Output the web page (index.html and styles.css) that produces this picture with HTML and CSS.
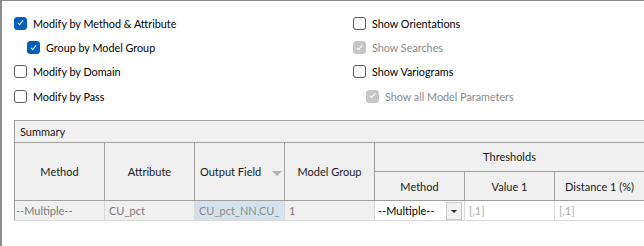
FILE: index.html
```html
<!DOCTYPE html>
<html lang="en">
  <head>
    <meta charset="UTF-8" />
    <title>Modify Settings</title>
    <link rel="stylesheet" href="styles.css">
  </head>
  <body>
    <section class="options">
      <div class="col">
        <label class="check"><span class="box checked"></span>Modify by Method &amp; Attribute</label>
        <label class="check sub"><span class="box checked"></span>Group by Model Group</label>
        <label class="check"><span class="box"></span>Modify by Domain</label>
        <label class="check"><span class="box"></span>Modify by Pass</label>
      </div>
      <div class="col">
        <label class="check"><span class="box"></span>Show Orientations</label>
        <label class="check disabled"><span class="box checked"></span>Show Searches</label>
        <label class="check"><span class="box"></span>Show Variograms</label>
        <label class="check sub disabled"><span class="box checked"></span>Show all Model Parameters</label>
      </div>
    </section>

    <section class="summary">
      <div class="summary-title">Summary</div>
      <table class="grid">
        <colgroup>
          <col><col><col><col><col><col><col>
        </colgroup>
        <thead>
          <tr class="head-top">
            <th rowspan="2">Method</th>
            <th rowspan="2">Attribute</th>
            <th rowspan="2" class="sorted">Output Field <span class="sort-arrow"></span></th>
            <th rowspan="2">Model Group</th>
            <th colspan="3">Thresholds</th>
          </tr>
          <tr class="head-sub">
            <th>Method</th>
            <th>Value 1</th>
            <th>Distance 1 (%)</th>
          </tr>
        </thead>
        <tbody>
          <tr>
            <td class="ro">--Multiple--</td>
            <td class="ro">CU_pct</td>
            <td class="ro selected">CU_pct_NN,CU_</td>
            <td class="ro">1</td>
            <td class="combo"><span class="combo-text">--Multiple--</span><span class="drop"></span></td>
            <td class="empty">[,1]</td>
            <td class="empty">[,1]</td>
          </tr>
        </tbody>
      </table>
    </section>
  </body>
</html>
```

FILE: styles.css
```css
*,
*::before,
*::after {
  box-sizing: border-box;
}
:root {
  --clr-text: #000;
  --clr-muted: #7a7a7a;
  --clr-line: #a0a0a0;
  --clr-line-light: #d9d9d9;
  --clr-head: #f0f0f0;
  --clr-blue: #005fb8;
  --ff-base: Lato, "Liberation Sans", sans-serif;
}
body {
  margin: 0;
  height: 246px;
  font-family: var(--ff-base);
  font-size: 11px;
  color: var(--clr-text);
  background: #fff;
  border-top: 1px solid #8c8c8c;
  border-left: 2px solid #8c8c8c;
  overflow: hidden;
}

/* check options */
.options {
  display: grid;
  grid-template-columns: 339px 1fr;
  padding: 10px 0 0 12px;
}
.col {
  display: flex;
  flex-direction: column;
}
.check {
  display: flex;
  align-items: center;
  gap: 6px;
  height: 24.4px;
  font-size: 10.8px;
  white-space: nowrap;
}
.check.sub {
  padding-left: 13px;
}
.check.disabled {
  color: #8a8a8a;
}
.box {
  flex: none;
  width: 13px;
  height: 13px;
  border: 1px solid #5c5c5c;
  border-radius: 3px;
  background: #fff;
  position: relative;
}
.box.checked {
  border-color: var(--clr-blue);
  background: var(--clr-blue);
}
.box.checked::after {
  content: "";
  position: absolute;
  left: 3.5px;
  top: 1.5px;
  width: 3px;
  height: 6px;
  border: solid #fff;
  border-width: 0 1px 1px 0;
  transform: rotate(40deg);
}
.disabled .box.checked {
  border-color: #c6c6c6;
  background: #c6c6c6;
}

/* summary grid */
.summary {
  margin: 11px 0 0 12px;
  width: 640px;
}
.summary-title {
  height: 23px;
  line-height: 21px;
  padding-left: 5px;
  background: var(--clr-head);
  border: 1px solid var(--clr-line);
  border-right: 0;
  color: #1a1a1a;
}
.grid {
  border-collapse: collapse;
  table-layout: fixed;
  width: 630px;
}
.grid col {
  width: 90px;
}
.grid th {
  background: var(--clr-head);
  border: 1px solid var(--clr-line);
  border-top: 0;
  font-weight: normal;
  color: #1a1a1a;
  padding: 0;
  white-space: nowrap;
}
.head-top th,
.head-sub th {
  height: 29px;
}
.grid .sorted {
  text-align: left;
  padding-left: 5px;
}
.sort-arrow {
  display: inline-block;
  margin-left: 8px;
  border-left: 5px solid transparent;
  border-right: 5px solid transparent;
  border-top: 5px solid #b4b4b4;
  vertical-align: middle;
}
.grid td {
  height: 20px;
  padding: 0 4px;
  border: 1px solid var(--clr-line-light);
  border-top: 0;
  white-space: nowrap;
  overflow: hidden;
}
.grid td:first-child {
  border-left-color: var(--clr-line);
  padding-left: 1px;
}
.grid .ro {
  background: var(--clr-head);
  color: var(--clr-muted);
}
.grid .selected {
  background: #d4e2ec;
  color: #8a8a8a;
  padding-right: 0;
  text-overflow: clip;
}
.grid .combo {
  padding: 0 1px 0 3px;
}
.combo-text {
  display: inline-block;
  width: 68px;
  vertical-align: middle;
}
.drop {
  display: inline-block;
  width: 16px;
  height: 18px;
  border: 1px solid #c8c8c8;
  background: #f2f2f2;
  vertical-align: middle;
  position: relative;
}
.drop::after {
  content: "";
  position: absolute;
  left: 4px;
  top: 7px;
  border-left: 3px solid transparent;
  border-right: 3px solid transparent;
  border-top: 3px solid #222;
}
.grid .empty {
  color: #a8a8a8;
}
```
